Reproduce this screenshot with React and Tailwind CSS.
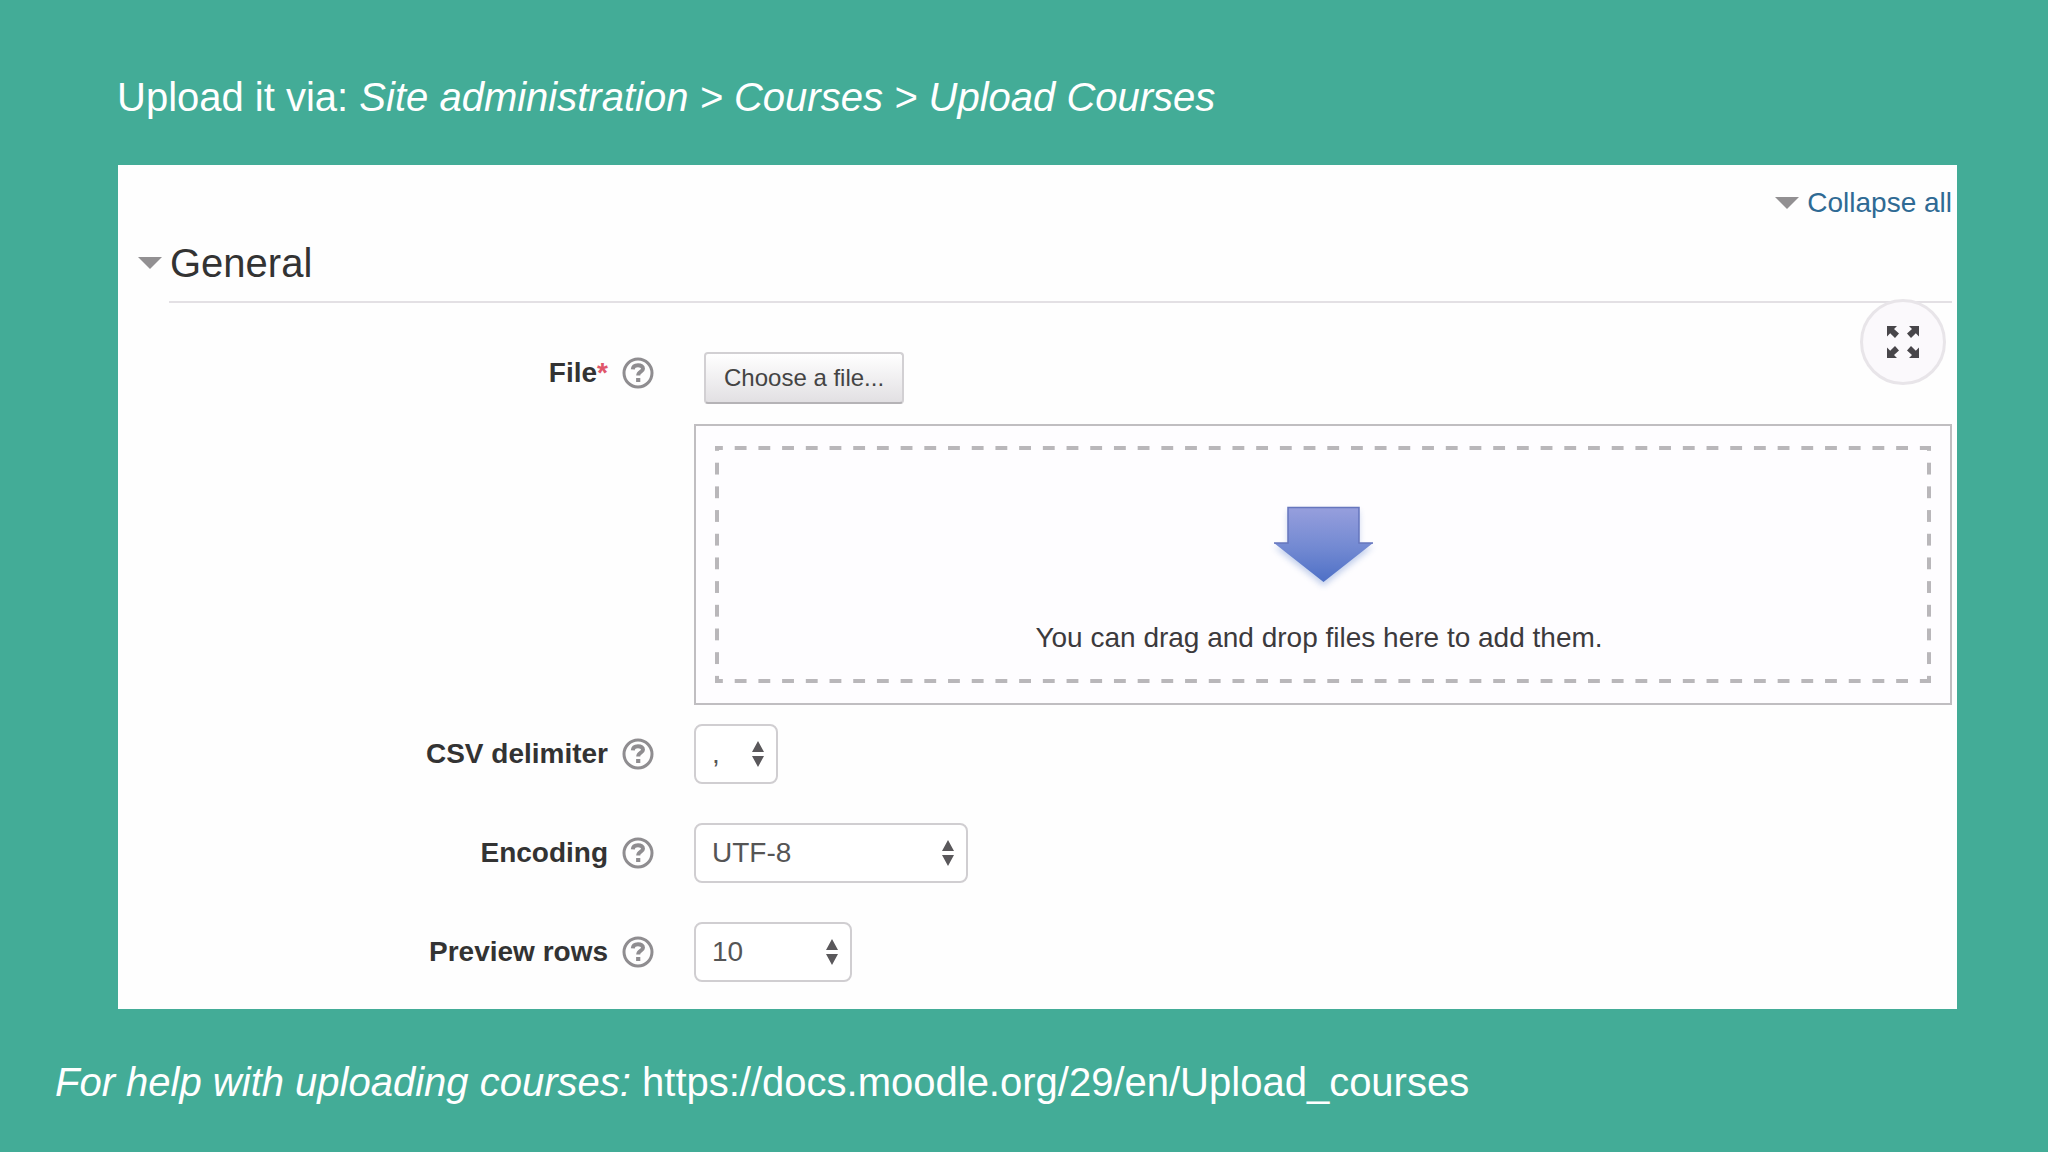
import React from "react";

function Triangle() {
  return (
    <svg aria-hidden="true" className="h-3 w-6 shrink-0" viewBox="0 0 24 12">
      <path d="M0 0H24L12 12Z" fill="#929092" />
    </svg>
  );
}

function HelpButton({ topic }) {
  return (
    <button type="button" aria-label={`Help with ${topic}`} className="h-8 w-8 shrink-0">
      <svg aria-hidden="true" className="h-8 w-8" viewBox="0 0 32 32" fill="none">
        <circle cx="16" cy="16" r="14" stroke="#8f8d90" strokeWidth="3" />
        <path
          d="M10.800 12.400C11 9.300 13.200 8.200 16 8.200C19 8.200 21 9.600 21 11.800C21 14.800 16.200 14.600 16.200 18.400"
          stroke="#8f8d90"
          strokeWidth="4"
        />
        <rect x="14.100" y="21" width="4.200" height="4" fill="#8f8d90" />
      </svg>
    </button>
  );
}

function LabelCell({ id, text, required }) {
  return (
    <div className="flex h-15 items-center justify-end gap-3.5">
      <label htmlFor={id} className="font-bold text-[#333]">
        {text}
        {required && <span className="text-[#e0566a]">*</span>}
      </label>
      <HelpButton topic={text} />
    </div>
  );
}

function SelectRow({ id, text, value, widthClass }) {
  return (
    <div className="grid grid-cols-[536px_1fr] gap-x-10">
      <LabelCell id={id} text={text} />
      <div className={`relative h-15 ${widthClass}`}>
        <select
          id={id}
          defaultValue={value}
          className="h-full w-full appearance-none rounded-lg border-2 border-[#d0ced1] bg-white pl-4 text-[#555]"
        >
          <option>{value}</option>
        </select>
        <svg
          aria-hidden="true"
          className="pointer-events-none absolute top-4 right-3.5 h-7 w-3"
          viewBox="0 0 12 28"
        >
          <path d="M6 1L12 12H0ZM0 16H12L6 27Z" fill="#5a585b" />
        </svg>
      </div>
    </div>
  );
}

function FullscreenButton() {
  return (
    <button
      type="button"
      aria-label="Toggle full screen"
      className="absolute -top-1 right-1.5 flex h-[86px] w-[86px] items-center justify-center rounded-full border-3 border-[#e8e5e9] bg-[#fbf9fc]"
    >
      <svg aria-hidden="true" className="h-8 w-8" viewBox="0 0 32 32" fill="#48464a">
        <path id="corner" d="M0 0H10L7 3L12 7.5L8 12L3.2 7.2L0 10.5Z" />
        <use href="#corner" transform="translate(32 0) scale(-1 1)" />
        <use href="#corner" transform="translate(0 32) scale(1 -1)" />
        <use href="#corner" transform="translate(32 32) scale(-1 -1)" />
      </svg>
    </button>
  );
}

function DropArrow() {
  return (
    <svg aria-hidden="true" className="h-20 w-25 overflow-visible" viewBox="0 0 100 80">
      <defs>
        <linearGradient id="arrowFill" x1="0" y1="0" x2="0" y2="1">
          <stop offset="0" stopColor="#979fdd" />
          <stop offset="0.55" stopColor="#7289d2" />
          <stop offset="1" stopColor="#4e70c6" />
        </linearGradient>
      </defs>
      <path
        d="M15 1H86V37H100L50.500 76L1 37H15Z"
        fill="url(#arrowFill)"
        className="drop-shadow-[0_4px_3px_rgba(120,150,210,0.45)]"
      />
      <path d="M1 37H15V1.500H86V37H100" fill="none" stroke="#6676bd" strokeWidth="1.500" />
    </svg>
  );
}

function DropZone() {
  return (
    <div className="border-2 border-[#c0bec1] bg-[#fefdff] px-[19px] py-5">
      <div className="flex h-[237px] flex-col items-center bg-[linear-gradient(90deg,#b9b7ba_52%,transparent_52%),linear-gradient(90deg,#b9b7ba_52%,transparent_52%),linear-gradient(#b9b7ba_52%,transparent_52%),linear-gradient(#b9b7ba_52%,transparent_52%)] bg-[size:1.95%_4px,1.95%_4px,4px_10%,4px_10%] bg-[position:-4px_0,-4px_100%,0_-7px,100%_-7px] [background-repeat:repeat-x,repeat-x,repeat-y,repeat-y] pt-15">
        <DropArrow />
        <p className="mt-8 pr-2 leading-10 text-[#3c3a3d]">
          You can drag and drop files here to add them.
        </p>
      </div>
    </div>
  );
}

export default function App() {
  return (
    <div className="min-h-screen bg-[#43ac97] pb-8 font-['Liberation_Sans',Arial,sans-serif]">
      <h1 className="pt-[73px] pl-[117px] text-[40px] leading-12 text-white">
        Upload it via: <em>Site administration &gt; Courses &gt; Upload Courses</em>
      </h1>

      <main className="mt-11 mr-[91px] ml-[118px] bg-[#fefefe] pt-[18px] pb-[27px] text-[28px] leading-10">
        <form className="pr-[5px]">
          <div className="flex justify-end">
            <a href="#general" className="flex items-center gap-2 text-[#2f6a94]">
              <Triangle />
              Collapse all
            </a>
          </div>

          <h2 id="general" className="flex items-center pt-3 pl-5">
            <button type="button" className="flex items-center gap-2 text-[40px] leading-14 text-[#333]">
              <Triangle />
              General
            </button>
          </h2>
          <hr className="mt-2.5 ml-[51px] border-t-2 border-[#e3e0e4]" />

          <div className="relative grid grid-cols-[536px_1fr] gap-x-10 pt-10">
            <LabelCell id="file" text="File" required />
            <div>
              <button
                id="file"
                type="button"
                className="mt-[9px] ml-2.5 h-[52px] rounded border-2 border-[#d2d0d3] border-b-[#b5b3b6] bg-linear-to-b from-white to-[#e2e0e3] px-[18px] text-[24px] text-[#444]"
              >
                Choose a file...
              </button>
              <div className="mt-5">
                <DropZone />
              </div>
            </div>
            <FullscreenButton />
          </div>

          <div className="mt-[19px] flex flex-col gap-[39px]">
            <SelectRow id="delimiter" text="CSV delimiter" value="," widthClass="w-[84px]" />
            <SelectRow id="encoding" text="Encoding" value="UTF-8" widthClass="w-[274px]" />
            <SelectRow id="preview" text="Preview rows" value="10" widthClass="w-[158px]" />
          </div>
        </form>
      </main>

      <p className="mt-[49px] pl-[55px] text-[40px] leading-12 text-white">
        <em>For help with uploading courses:</em>{" "}
        <a href="https://docs.moodle.org/29/en/Upload_courses">
          https://docs.moodle.org/29/en/Upload_courses
        </a>
      </p>
    </div>
  );
}
